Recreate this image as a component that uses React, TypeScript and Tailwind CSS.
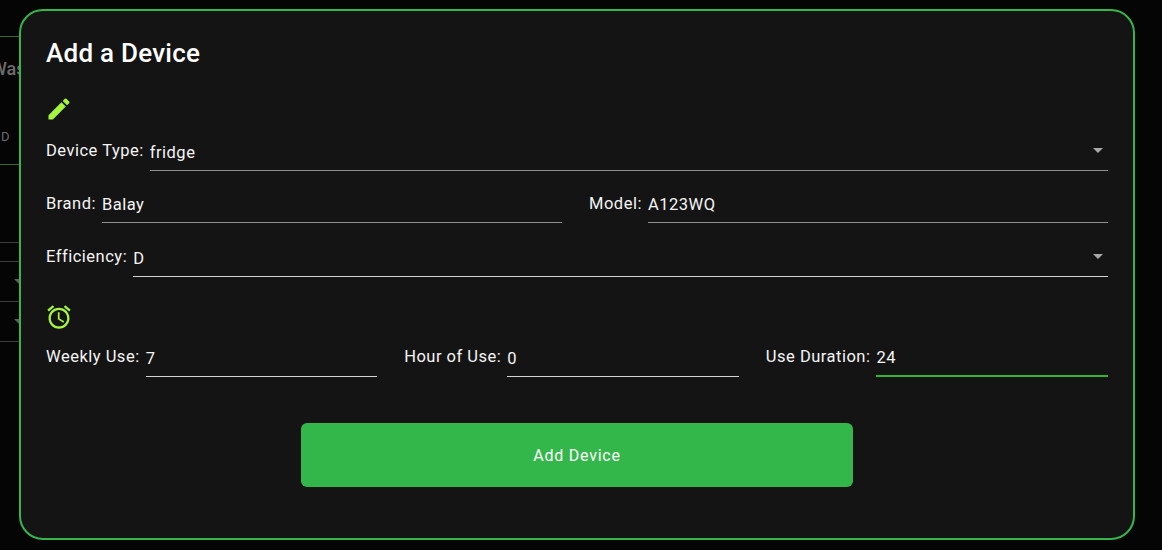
import React from 'react';

const Caret = () => (
  <svg viewBox="0 0 10 5" className="h-[5px] w-[10px] fill-current">
    <path d="M0 0h10L5 5z" />
  </svg>
);

const Field = ({
  label,
  value,
  select,
  focused,
  line = 'border-[#b4b4b4]',
  className = '',
  inputClass = 'h-[32px]',
}: {
  label: string;
  value: string;
  select?: boolean;
  focused?: boolean;
  line?: string;
  className?: string;
  inputClass?: string;
}) => (
  <div className={`flex items-start gap-[6px] ${className}`}>
    <span className="text-[16.5px] leading-[24px] tracking-[0.5px] text-[#f4f4f4] whitespace-nowrap">{label}</span>
    <div
      className={`flex w-0 flex-1 items-center justify-between pb-[3px] text-[16.5px] tracking-[0.5px] text-[#f4f4f4] ${inputClass} ${
        focused ? 'border-b-[2px] border-[#2fb52f]' : `border-b ${line}`
      }`}
    >
      <span>{value}</span>
      {select && (
        <span className="mr-[5px] -mt-[5px] text-[#a8a8a8]">
          <Caret />
        </span>
      )}
    </div>
  </div>
);

export default function App() {
  return (
    <div className="relative h-[550px] w-[1162px] overflow-hidden bg-[#050505] font-['Roboto',sans-serif]">
      {/* page behind the dialog */}
      <div className="w-[19px] text-[#6c6c6c]">
        <div className="mt-[36px] h-[129px] border-y border-[#3f6a12] pt-[21px]">
          <div className="-ml-[9px] whitespace-nowrap text-[18px] font-medium leading-[22px]">Was</div>
          <div className="mt-[50px] ml-[1px] text-[13px] leading-[14px]">D</div>
        </div>
        <div className="mt-[77px] h-[20px] border-y border-[#3a3a3a]" />
        <div className="flex h-[40px] items-center justify-end border-b border-[#3a3a3a] text-[#5c5c5c]">
          <span className="-mr-[5px]">
            <Caret />
          </span>
        </div>
        <div className="flex h-[40px] items-center justify-end border-b border-[#3a3a3a] text-[#5c5c5c]">
          <span className="-mr-[5px]">
            <Caret />
          </span>
        </div>
      </div>

      {/* dialog */}
      <div className="absolute left-[19px] top-[9px] flex h-[531px] w-[1116px] flex-col rounded-[24px] border-[2px] border-[#35b54a] bg-[#141414] px-[25px] pt-[24px] text-white">
        <h2 className="text-[26px] font-medium leading-[36px] tracking-[0.25px]">Add a Device</h2>

        <svg viewBox="0 0 24 24" className="ml-[-1px] mt-[24px] h-[28px] w-[28px] fill-[#a4f53c]">
          <path d="M3 17.25V21h3.75L17.81 9.94l-3.75-3.75L3 17.25zM20.71 7.04c.39-.39.39-1.02 0-1.41l-2.34-2.34a.9959.9959 0 0 0-1.41 0l-1.83 1.83 3.75 3.75 1.83-1.83z" />
        </svg>

        <Field label="Device Type:" value="fridge" select line="border-[#8f8f8f]" className="mt-[16px] w-[1062px]" />

        <div className="mt-[21px] flex w-[1062px] gap-[27px]">
          <Field label="Brand:" value="Balay" line="border-[#8f8f8f]" inputClass="h-[31px]" className="flex-auto" />
          <Field label="Model:" value="A123WQ" line="border-[#8f8f8f]" inputClass="h-[31px]" className="flex-auto" />
        </div>

        <Field label="Efficiency:" value="D" select line="border-[#d4d4d4]" className="mt-[22px] w-[1062px]" />

        <svg viewBox="0 0 24 24" className="ml-[-1px] mt-[26px] h-[28px] w-[28px] fill-[#a4f53c]">
          <path d="M22 5.72l-4.6-3.86-1.29 1.53 4.6 3.86L22 5.72zM7.88 3.39L6.6 1.86 2 5.71l1.29 1.53 4.59-3.85zM12.5 8H11v6l4.75 2.85.75-1.23-4-2.37V8zM12 4c-4.97 0-9 4.03-9 9s4.03 9 9 9 9-4.03 9-9-4.03-9-9-9zm0 16c-3.87 0-7-3.13-7-7s3.13-7 7-7 7 3.13 7 7-3.13 7-7 7z" />
        </svg>

        <div className="mt-[14px] flex w-[1062px] gap-[27px]">
          <Field label="Weekly Use:" value="7" line="border-[#d4d4d4]" className="flex-auto" />
          <Field label="Hour of Use:" value="0" line="border-[#d4d4d4]" className="flex-auto" />
          <Field label="Use Duration:" value="24" focused className="flex-auto" />
        </div>

        <button className="ml-[255px] mt-[46px] flex h-[64px] w-[552px] items-center justify-center rounded-[6px] bg-[#34b74a] pt-[2px] text-[16px] font-normal tracking-[0.75px] text-white">
          Add Device
        </button>
      </div>
    </div>
  );
}
